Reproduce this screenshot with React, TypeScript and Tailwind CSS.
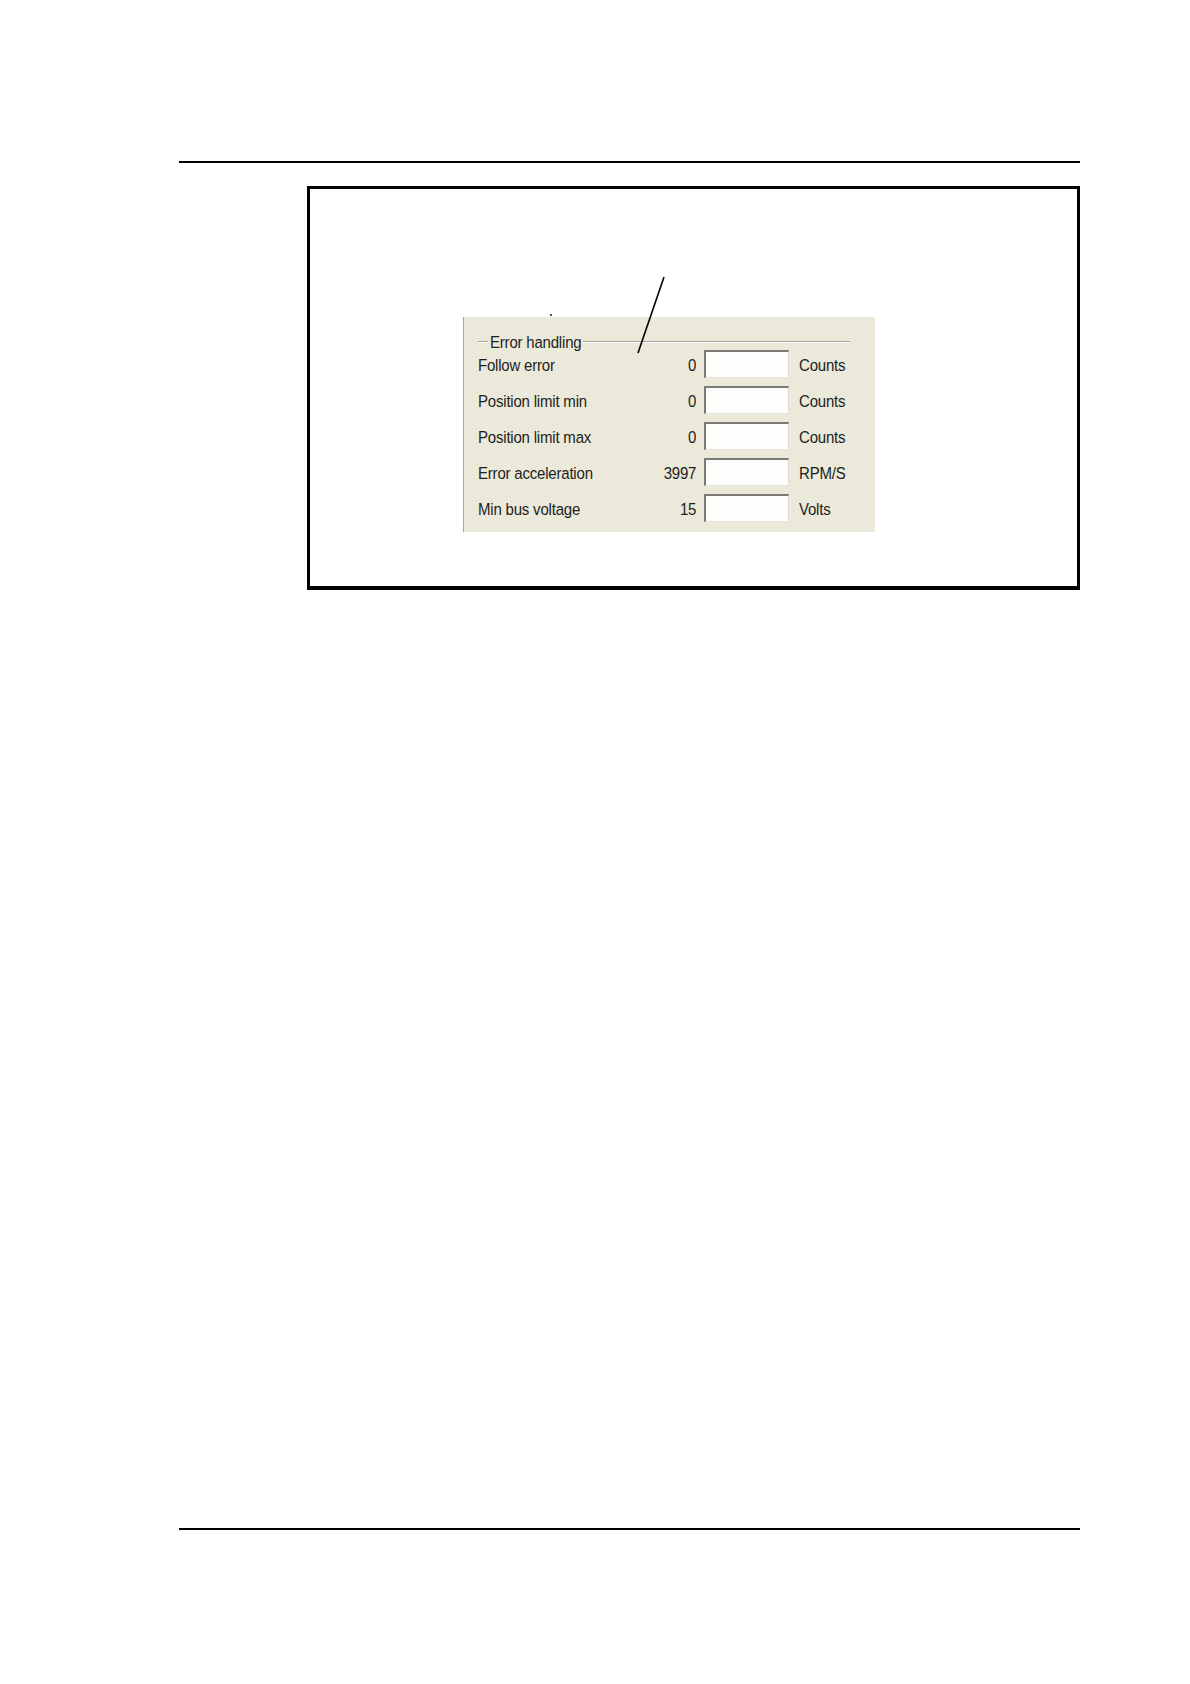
import React from "react";

const rows = [
  { label: "Follow error", value: "0", unit: "Counts" },
  { label: "Position limit min", value: "0", unit: "Counts" },
  { label: "Position limit max", value: "0", unit: "Counts" },
  { label: "Error acceleration", value: "3997", unit: "RPM/S" },
  { label: "Min bus voltage", value: "15", unit: "Volts" },
];

export default function App() {
  return (
    <div
      className="relative w-[1190px] h-[1684px] bg-white flex flex-col"
      style={{ fontFamily: '"Liberation Sans", Arial, sans-serif' }}
    >
      <div className="mt-[161px] ml-[179px] w-[901px] h-[2px] bg-black" />

      <div className="mt-[23px] ml-[307px] w-[773px] h-[404px] border-t-[3px] border-l-[3px] border-r-[3px] border-b-[4px] border-black flex flex-col">
        <div className="relative mt-[128px] ml-[153px] w-[412px] h-[215px] bg-[#ebe9d9] border-l border-[#a8a8a0] text-[#1e1e1e] text-[15px] leading-none">
          <div className="absolute left-[86px] -top-[3px] w-[2px] h-[2px] bg-[#555]" />
          <div className="absolute left-[14px] top-[17px] w-[372px] flex items-center">
            <div className="w-[10px] h-[2px] border-t border-b border-t-[#a5a399] border-b-white" />
            <span className="px-[2px] inline-block scale-y-[1.14] tracking-[-0.2px]">Error handling</span>
            <div className="flex-1 h-[2px] border-t border-b border-t-[#a5a399] border-b-white" />
          </div>
          <div className="absolute left-[14px] top-[33px] flex flex-col gap-[8px]">
            {rows.map((r) => (
              <div key={r.label} className="flex items-center h-[28px]">
                <div className="w-[218px] flex justify-between items-center">
                  <span className="inline-block scale-y-[1.14] tracking-[-0.2px]">{r.label}</span>
                  <span className="inline-block scale-y-[1.14] tracking-[-0.3px]">{r.value}</span>
                </div>
                <div className="ml-[8px] w-[85px] h-[28px] bg-[#fdfdfb] border-t-2 border-l-2 border-t-[#7a7a75] border-l-[#7a7a75] border-r border-b border-r-[#dcdad0] border-b-[#e6e4da]" />
                <span className="ml-[10px] inline-block scale-y-[1.14] tracking-[-0.2px]">{r.unit}</span>
              </div>
            ))}
          </div>
        </div>
      </div>

      <div className="mt-[938px] ml-[179px] w-[901px] h-[2px] bg-black" />

      <svg className="absolute left-0 top-0 pointer-events-none" width="1190" height="1684">
        <line x1="664" y1="277" x2="638" y2="353" stroke="#000" strokeWidth="1.6" />
      </svg>
    </div>
  );
}
